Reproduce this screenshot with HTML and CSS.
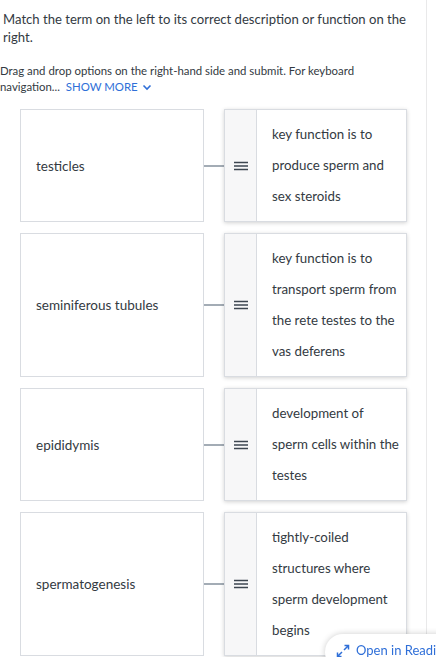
FILE: index.html
```html
<!DOCTYPE html>
<html>
<head>
<meta charset="utf-8">
<link rel="stylesheet" href="styles.css">
</head>
<body>
<div class="page">
  <div class="content">
    <p class="prompt">Match the term on the left to its correct description or function on the right.</p>
    <p class="help">Drag and drop options on the right-hand side and submit. For keyboard navigation... <span class="more">SHOW MORE<svg class="chev" width="10" height="7" viewBox="0 0 10 7"><path d="M1.5 1.5 L5 5 L8.5 1.5" fill="none" stroke="#2f6fd8" stroke-width="1.6"/></svg></span></p>
    <div class="rows">
      <div class="row">
        <div class="term">testicles</div>
        <div class="link"></div>
        <div class="card">
          <div class="handle"><svg class="grip" width="14" height="10" viewBox="0 0 14 10"><path d="M0 1.5 H14 M0 5 H14 M0 8.5 H14" stroke="#3d4650" stroke-width="1.6"/></svg></div>
          <div class="desc">key function is to produce sperm and sex steroids</div>
        </div>
      </div>
      <div class="row">
        <div class="term">seminiferous tubules</div>
        <div class="link"></div>
        <div class="card">
          <div class="handle"><svg class="grip" width="14" height="10" viewBox="0 0 14 10"><path d="M0 1.5 H14 M0 5 H14 M0 8.5 H14" stroke="#3d4650" stroke-width="1.6"/></svg></div>
          <div class="desc">key function is to transport sperm from the rete testes to the vas deferens</div>
        </div>
      </div>
      <div class="row">
        <div class="term">epididymis</div>
        <div class="link"></div>
        <div class="card">
          <div class="handle"><svg class="grip" width="14" height="10" viewBox="0 0 14 10"><path d="M0 1.5 H14 M0 5 H14 M0 8.5 H14" stroke="#3d4650" stroke-width="1.6"/></svg></div>
          <div class="desc">development of sperm cells within the testes</div>
        </div>
      </div>
      <div class="row">
        <div class="term">spermatogenesis</div>
        <div class="link"></div>
        <div class="card">
          <div class="handle"><svg class="grip" width="14" height="10" viewBox="0 0 14 10"><path d="M0 1.5 H14 M0 5 H14 M0 8.5 H14" stroke="#3d4650" stroke-width="1.6"/></svg></div>
          <div class="desc">tightly-coiled structures where sperm development begins</div>
        </div>
      </div>
    </div>
  </div>
  <div class="side"></div>
</div>
<div class="reader">
  <svg class="expand" width="16" height="16" viewBox="0 0 16 16"><path d="M9.5 2.5 H13.5 V6.5 M13.5 2.5 L9 7 M6.5 13.5 H2.5 V9.5 M2.5 13.5 L7 9" fill="none" stroke="#2f6fd8" stroke-width="1.5"/></svg>
  <span>Open in Readi</span>
</div>
</body>
</html>
```
FILE: styles.css
```css
html, body {
  margin: 0;
  padding: 0;
  background: #fff;
  overflow: hidden;
}
body {
  font-family: "Lato", "Liberation Sans", sans-serif;
  color: #333a42;
  width: 436px;
  height: 657px;
}
.page {
  display: flex;
  height: 657px;
}
.content {
  width: 427px;
  border-right: 1px solid #e9e9ea;
  box-sizing: border-box;
}
.side {
  flex: 1;
  background: #fff;
}
.prompt {
  margin: 10px 0 0 3px;
  font-size: 13.1px;
  line-height: 18px;
  color: #333a42;
}
.help {
  margin: 17px 0 0 0;
  font-size: 11.4px;
  line-height: 16px;
  width: 362px;
  color: #333a42;
}
.more {
  display: inline-flex;
  align-items: center;
  gap: 4px;
  color: #2f6fd8;
  margin-left: 3px;
  line-height: 16px;
}
.chev {
  display: block;
  margin-top: 1px;
}
.rows {
  margin: 14px 0 0 20px;
  display: flex;
  flex-direction: column;
  gap: 11px;
}
.row {
  display: grid;
  grid-template-columns: 184px 20px 183px;
  align-items: stretch;
}
.term {
  border: 1px solid #d9dce1;
  display: flex;
  align-items: center;
  padding-left: 15px;
  font-size: 13.5px;
  color: #333a42;
}
.link {
  align-self: center;
  height: 2px;
  background: #a3acb5;
}
.card {
  display: flex;
  border: 1px solid #d9dce1;
  box-shadow: 0 1px 4px rgba(0,0,0,0.18);
  background: #fff;
}
.handle {
  width: 31px;
  background: #f7f7f8;
  border-right: 1px solid #d9dce1;
  display: flex;
  align-items: center;
  justify-content: center;
  flex: none;
}
.grip {
  display: block;
}
.desc {
  padding: 9px 7px 9px 15px;
  font-size: 13.3px;
  line-height: 31px;
  color: #333a42;
}
.reader {
  position: fixed;
  left: 325px;
  top: 634px;
  width: 140px;
  height: 36px;
  background: #fff;
  border-radius: 18px;
  box-shadow: 0 0 6px rgba(0,0,0,0.2);
  display: flex;
  align-items: flex-start;
  padding: 8px 0 0 10px;
  box-sizing: border-box;
  gap: 5px;
  color: #2f6fd8;
  font-size: 13px;
  white-space: nowrap;
}
.expand {
  margin-top: 1px;
}
```
